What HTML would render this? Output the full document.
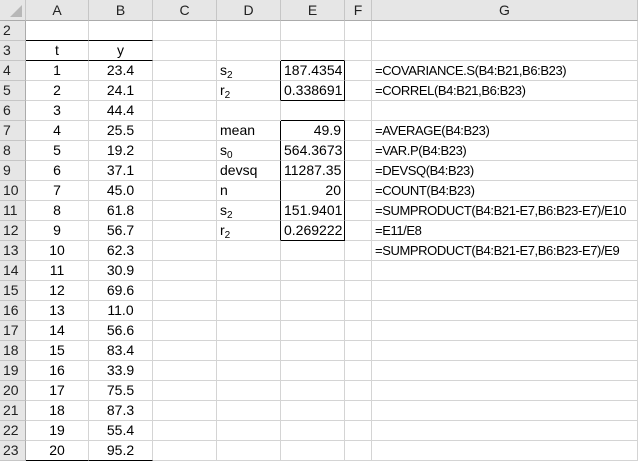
<!DOCTYPE html>
<html><head><style>
body{margin:0;width:638px;height:463px;overflow:hidden;background:#fff;font-family:"Liberation Sans",Arial,sans-serif;font-size:14px;color:#000}
table{border-collapse:separate;border-spacing:0;table-layout:fixed;width:638px}
td{box-sizing:border-box;height:20px;padding:0 3px;line-height:19px;white-space:nowrap;overflow:hidden;border-right:1px solid #d4d4d4;border-bottom:1px solid #d4d4d4;vertical-align:bottom}
td.g{font-size:13px;letter-spacing:-0.4px;overflow:visible}
tr.h td{height:21px;background:#e6e6e6;text-align:center;border-right:1px solid #c6c6c6;border-bottom:1px solid #ababab;color:#222;line-height:20px}
td.r{background:#e6e6e6;border-right:1px solid #ababab;border-bottom:1px solid #c6c6c6;text-align:left;padding-left:3px;color:#222}
.c{text-align:center}.n{text-align:right}
.bb{border-bottom:1px solid #000}
.br{border-right:1px solid #000}
sub{font-size:10px;vertical-align:-3px;line-height:0}
</style></head><body>
<table>
<colgroup><col style="width:26px"><col style="width:63px"><col style="width:64px"><col style="width:64px"><col style="width:64px"><col style="width:64px"><col style="width:27px"><col style="width:266px"></colgroup>
<tr class="h"><td style="position:relative"><svg width="12" height="12" style="position:absolute;right:3px;bottom:3px"><polygon points="12,0 12,12 0,12" fill="#b7b7b7"/></svg></td><td>A</td><td>B</td><td>C</td><td>D</td><td>E</td><td>F</td><td>G</td></tr>
<tr><td class="r">2</td><td class="bb"></td><td class="bb"></td><td></td><td></td><td></td><td></td><td class="g"></td></tr>
<tr><td class="r">3</td><td class="c bb">t</td><td class="c bb">y</td><td></td><td></td><td class="bb"></td><td></td><td class="g"></td></tr>
<tr><td class="r">4</td><td class="c">1</td><td class="c">23.4</td><td></td><td class="br">s<sub>2</sub></td><td class="n br">187.4354</td><td></td><td class="g">=COVARIANCE.S(B4:B21,B6:B23)</td></tr>
<tr><td class="r">5</td><td class="c">2</td><td class="c">24.1</td><td></td><td class="br">r<sub>2</sub></td><td class="n br bb">0.338691</td><td></td><td class="g">=CORREL(B4:B21,B6:B23)</td></tr>
<tr><td class="r">6</td><td class="c">3</td><td class="c">44.4</td><td></td><td></td><td class="bb"></td><td></td><td class="g"></td></tr>
<tr><td class="r">7</td><td class="c">4</td><td class="c">25.5</td><td></td><td class="br">mean</td><td class="n br">49.9</td><td></td><td class="g">=AVERAGE(B4:B23)</td></tr>
<tr><td class="r">8</td><td class="c">5</td><td class="c">19.2</td><td></td><td class="br">s<sub>0</sub></td><td class="n br">564.3673</td><td></td><td class="g">=VAR.P(B4:B23)</td></tr>
<tr><td class="r">9</td><td class="c">6</td><td class="c">37.1</td><td></td><td class="br">devsq</td><td class="n br">11287.35</td><td></td><td class="g">=DEVSQ(B4:B23)</td></tr>
<tr><td class="r">10</td><td class="c">7</td><td class="c">45.0</td><td></td><td class="br">n</td><td class="n br">20</td><td></td><td class="g">=COUNT(B4:B23)</td></tr>
<tr><td class="r">11</td><td class="c">8</td><td class="c">61.8</td><td></td><td class="br">s<sub>2</sub></td><td class="n br">151.9401</td><td></td><td class="g">=SUMPRODUCT(B4:B21-E7,B6:B23-E7)/E10</td></tr>
<tr><td class="r">12</td><td class="c">9</td><td class="c">56.7</td><td></td><td class="br">r<sub>2</sub></td><td class="n br bb">0.269222</td><td></td><td class="g">=E11/E8</td></tr>
<tr><td class="r">13</td><td class="c">10</td><td class="c">62.3</td><td></td><td></td><td></td><td></td><td class="g">=SUMPRODUCT(B4:B21-E7,B6:B23-E7)/E9</td></tr>
<tr><td class="r">14</td><td class="c">11</td><td class="c">30.9</td><td></td><td></td><td></td><td></td><td class="g"></td></tr>
<tr><td class="r">15</td><td class="c">12</td><td class="c">69.6</td><td></td><td></td><td></td><td></td><td class="g"></td></tr>
<tr><td class="r">16</td><td class="c">13</td><td class="c">11.0</td><td></td><td></td><td></td><td></td><td class="g"></td></tr>
<tr><td class="r">17</td><td class="c">14</td><td class="c">56.6</td><td></td><td></td><td></td><td></td><td class="g"></td></tr>
<tr><td class="r">18</td><td class="c">15</td><td class="c">83.4</td><td></td><td></td><td></td><td></td><td class="g"></td></tr>
<tr><td class="r">19</td><td class="c">16</td><td class="c">33.9</td><td></td><td></td><td></td><td></td><td class="g"></td></tr>
<tr><td class="r">20</td><td class="c">17</td><td class="c">75.5</td><td></td><td></td><td></td><td></td><td class="g"></td></tr>
<tr><td class="r">21</td><td class="c">18</td><td class="c">87.3</td><td></td><td></td><td></td><td></td><td class="g"></td></tr>
<tr><td class="r">22</td><td class="c">19</td><td class="c">55.4</td><td></td><td></td><td></td><td></td><td class="g"></td></tr>
<tr><td class="r">23</td><td class="c bb">20</td><td class="c bb">95.2</td><td></td><td></td><td></td><td></td><td class="g"></td></tr>
</table>
</body></html>
